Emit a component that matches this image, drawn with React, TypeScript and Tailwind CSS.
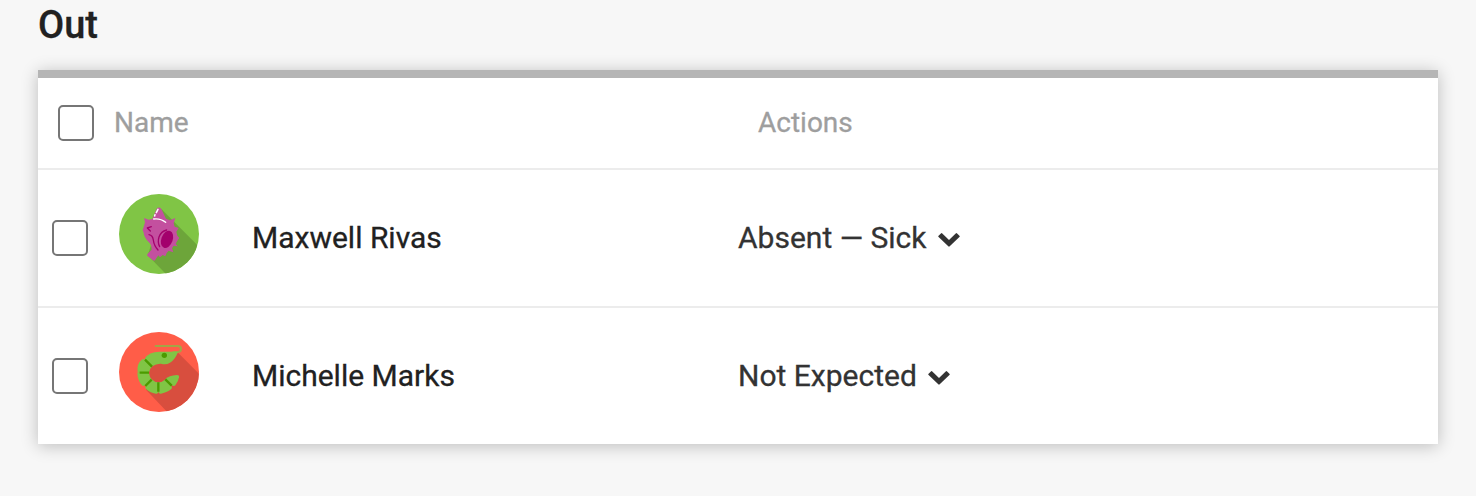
import React from "react";

function Checkbox({ label }: { label: string }) {
  return (
    <button
      role="checkbox"
      aria-checked="false"
      aria-label={label}
      className="block size-9 shrink-0 rounded-[5px] border-2 border-[#767676] bg-white"
    />
  );
}

function Chevron() {
  return (
    <svg viewBox="0 0 22 15" className="mt-1 h-[15px] w-[22px] shrink-0" fill="#333">
      <path d="M.6 3.7 2.9 1.4q.7-.7 1.4 0L11 8l6.7-6.6q.7-.7 1.4 0l2.3 2.3q.7.7 0 1.4l-9.7 9.2q-.7.7-1.4 0L.6 5.1q-.7-.7 0-1.4Z" />
    </svg>
  );
}

function ShellAvatar() {
  return (
    <svg viewBox="27 27 240 240" className="size-20 shrink-0">
      <defs>
        <clipPath id="shell-disc">
          <circle cx="147" cy="147" r="120" />
        </clipPath>
      </defs>
      <g clipPath="url(#shell-disc)">
        <rect x="27" y="27" width="240" height="240" fill="#80c545" />
        <path d="M154 72 300 218 300 300 200 300 113 211 130 160Z" fill="#6da53a" />
      </g>
      <path
        d="M140 71Q147 64 154 72L168 101 180 106 196 99 191 115 194 125 206 129 199 140 202 152 208 159 202 167 197 176 203 184 191 182 186 190 190 202 176 197 170 204 166 214 158 210 150 217 145 211 136 224Q133 229 128 225L113 213Q110 210 113 206L125 194Q125 179 116 171 102 157 101 143L98 135 101 126 105 112 102 99 116 104 127 102Z"
        fill="#c3509f"
      />
      <path d="M131 102Q151 99 167 112" fill="none" stroke="#fff" strokeWidth="4" strokeLinecap="round" />
      <path d="m144 73-5 10M135 89l-1 4" fill="none" stroke="#fff" strokeWidth="4.5" strokeLinecap="round" />
      <ellipse cx="171" cy="163" rx="17" ry="27" transform="rotate(20 171 163)" fill="#a3006c" />
      <path
        d="M170 135Q153 139 147 156 142 172 149 185M124 125 112 129 121 138M117 149Q128 151 130 165 132 182 144 195"
        fill="none"
        stroke="#a3006c"
        strokeWidth="4"
        strokeLinecap="round"
        strokeLinejoin="round"
      />
    </svg>
  );
}

function ShrimpAvatar() {
  return (
    <svg viewBox="27 27 240 240" className="size-20 shrink-0">
      <defs>
        <clipPath id="shrimp-disc">
          <circle cx="147" cy="147" r="120" />
        </clipPath>
      </defs>
      <g clipPath="url(#shrimp-disc)">
        <rect x="27" y="27" width="240" height="240" fill="#ff5d48" />
        <path d="M205 90 300 185 300 300 203 300 108 200 108 130 150 110Z" fill="#d84e3e" />
      </g>
      <path d="M137 69H204Q213 69 213 78T203 87H190" fill="none" stroke="#a3a545" strokeWidth="6.5" strokeLinecap="round" />
      <path
        d="M104 107Q116 86 149 86H204Q197 108 180 119 168 127 153 122 139 121 127 130Z"
        fill="#80c545"
      />
      <g fill="#80c545">
        <path d="M103 109 127 130Q118 138 117 149H83Q79 122 97 109 100 107 103 109Z" />
        <path d="M82 149H117Q118 161 126 170L102 188Q99 190 96 187 83 173 82 149Z" />
        <path d="M125 169Q134 178 145 178V208Q143 213 138 212 119 209 107 197 104 193 107 190Z" />
        <path d="M145 178Q157 178 167 169L185 191Q188 194 184 198 173 208 153 212 147 213 145 207Z" />
        <path d="M166 169Q176 157 201 156 208 156 207 163 205 176 196 187 192 191 188 188Z" />
      </g>
      <path
        d="M105 110 126 131M89 149H117M125 170 106 189M145 178V206M166 169 185 188"
        fill="none"
        stroke="#4b9b00"
        strokeWidth="7"
      />
      <circle cx="163" cy="97" r="8" fill="#4b9b00" />
    </svg>
  );
}

const people = [
  { name: "Maxwell Rivas", status: "Absent — Sick", Avatar: ShellAvatar },
  { name: "Michelle Marks", status: "Not Expected", Avatar: ShrimpAvatar },
];

export default function App() {
  return (
    <main className="h-[496px] overflow-hidden bg-[#f7f7f7] px-[38px] font-['Roboto',sans-serif] text-[#212121] [-webkit-text-stroke:0.3px]">
      <h2 className="h-[70px] pt-[5px] text-[38px] leading-10 font-medium">Out</h2>
      <section className="border-t-8 border-[#b5b5b5] bg-white shadow-[0_2px_16px_rgba(0,0,0,0.24)]">
        <header className="flex h-[92px] items-center border-b-2 border-[#ececec] pl-5 text-[28px] text-[#9e9e9e]">
          <Checkbox label="Select all" />
          <span className="ml-5 w-[644px]">Name</span>
          <span>Actions</span>
        </header>
        {people.map(({ name, status, Avatar }) => (
          <div
            key={name}
            className="flex h-[138px] items-center border-b-2 border-[#ececec] pl-3.5 text-[30px] last:h-[136px] last:border-b-0"
          >
            <Checkbox label={`Select ${name}`} />
            <div className="mb-2 ml-[31px]">
              <Avatar />
            </div>
            <span className="mb-0.5 ml-[53px] w-[486px]">{name}</span>
            <button className="mb-0.5 flex items-center gap-[11px] text-[#333]">
              {status}
              <Chevron />
            </button>
          </div>
        ))}
      </section>
    </main>
  );
}
